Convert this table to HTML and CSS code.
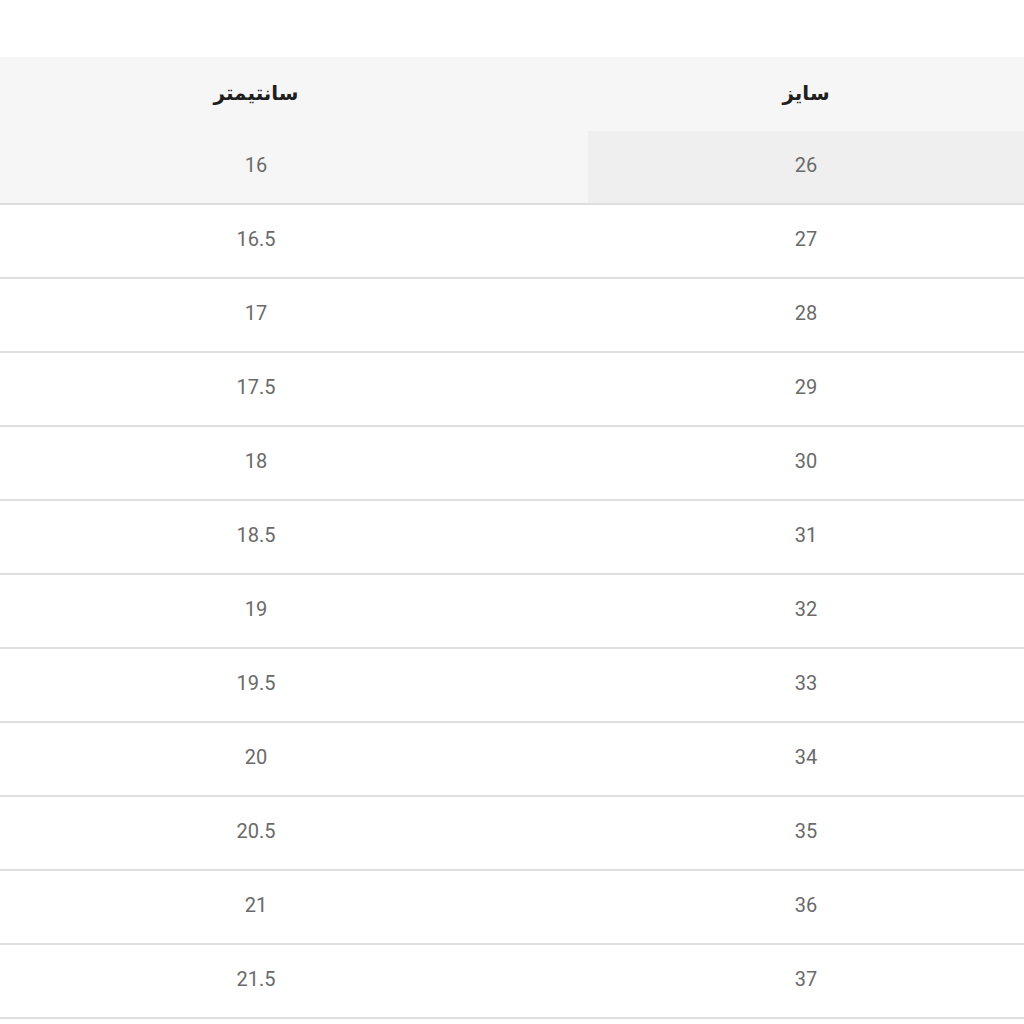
FILE: index.html
```html
<!DOCTYPE html>
<html lang="fa">
<head>
<meta charset="utf-8">
<link rel="stylesheet" href="styles.css">
</head>
<body>
<table class="size-table" dir="rtl">
  <thead>
    <tr><th class="col-size">سایز</th><th class="col-cm">سانتیمتر</th></tr>
  </thead>
  <tbody>
    <tr class="first"><td class="hl">26</td><td>16</td></tr>
    <tr><td>27</td><td>16.5</td></tr>
    <tr><td>28</td><td>17</td></tr>
    <tr><td>29</td><td>17.5</td></tr>
    <tr><td>30</td><td>18</td></tr>
    <tr><td>31</td><td>18.5</td></tr>
    <tr><td>32</td><td>19</td></tr>
    <tr><td>33</td><td>19.5</td></tr>
    <tr><td>34</td><td>20</td></tr>
    <tr><td>35</td><td>20.5</td></tr>
    <tr><td>36</td><td>21</td></tr>
    <tr><td>37</td><td>21.5</td></tr>
  </tbody>
</table>
</body>
</html>
```
FILE: styles.css
```css
html, body {
  margin: 0;
  padding: 0;
  background: #ffffff;
  overflow: hidden;
}
.size-table {
  margin-top: 57px;
  margin-left: -76px;
  width: 1100px;
  border-collapse: collapse;
  table-layout: fixed;
  font-family: Roboto, "DejaVu Sans", sans-serif;
}
.col-size { width: 436px; }
.col-cm { width: 664px; }
.size-table th {
  height: 72px;
  padding: 0 0 2px;
  background: #f6f6f6;
  color: #1f1f1f;
  font-family: "DejaVu Sans", sans-serif;
  font-weight: bold;
  font-size: 20px;
  text-align: center;
  vertical-align: middle;
}
.size-table td {
  height: 68px;
  padding: 0 0 4px;
  border-bottom: 2px solid #dedede;
  color: #6a6a6a;
  font-size: 20px;
  text-align: center;
  vertical-align: middle;
}
.size-table tr.first td { background: #f6f6f6; }
.size-table tr.first td.hl { background: #efefef; }
```
